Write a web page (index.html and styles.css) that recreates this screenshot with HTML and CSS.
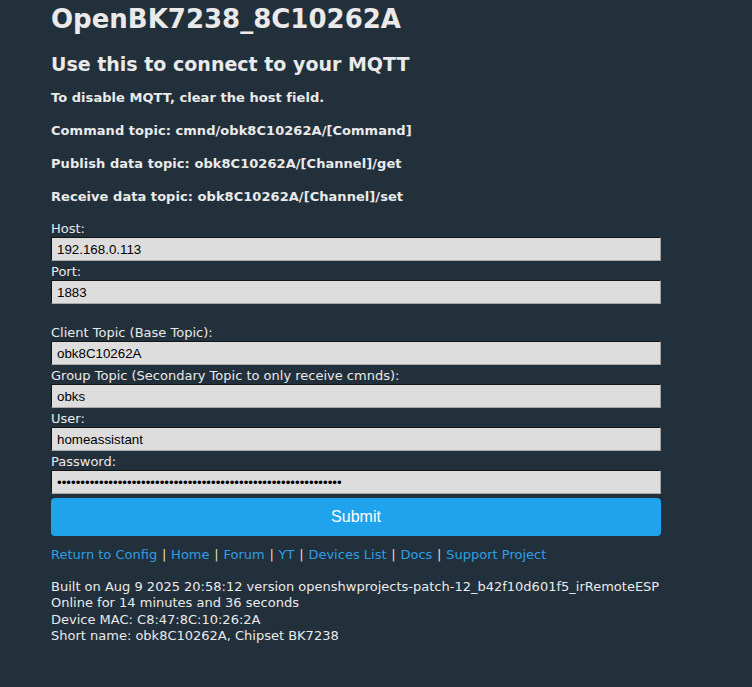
FILE: index.html
```html
<!DOCTYPE html>
<html>
<head>
<meta charset="utf-8">
<link rel="stylesheet" href="styles.css">
</head>
<body>
<div class="wrap">
  <h1 class="title">OpenBK7238_8C10262A</h1>
  <h2 class="subtitle">Use this to connect to your MQTT</h2>
  <p class="info">To disable MQTT, clear the host field.</p>
  <p class="info">Command topic: cmnd/obk8C10262A/[Command]</p>
  <p class="info">Publish data topic: obk8C10262A/[Channel]/get</p>
  <p class="info">Receive data topic: obk8C10262A/[Channel]/set</p>
  <form class="form">
    <label class="lbl">Host:</label>
    <input class="field" type="text" value="192.168.0.113">
    <label class="lbl">Port:</label>
    <input class="field" type="text" value="1883">
    <div class="spacer"></div>
    <label class="lbl">Client Topic (Base Topic):</label>
    <input class="field" type="text" value="obk8C10262A">
    <label class="lbl">Group Topic (Secondary Topic to only receive cmnds):</label>
    <input class="field" type="text" value="obks">
    <label class="lbl">User:</label>
    <input class="field" type="text" value="homeassistant">
    <label class="lbl">Password:</label>
    <input class="field" type="password" value="0123456789012345678901234567890123456789012345678901234567890">
    <button class="submit" type="button">Submit</button>
  </form>
  <div class="links">
    <a href="#">Return to Config</a><span class="sep"> | </span><a href="#">Home</a><span class="sep"> | </span><a href="#">Forum</a><span class="sep"> | </span><a href="#">YT</a><span class="sep"> | </span><a href="#">Devices List</a><span class="sep"> | </span><a href="#">Docs</a><span class="sep"> | </span><a href="#">Support Project</a>
  </div>
  <div class="footer">
    <div>Built on Aug 9 2025 20:58:12 version openshwprojects-patch-12_b42f10d601f5_irRemoteESP</div>
    <div>Online for 14 minutes and 36 seconds</div>
    <div>Device MAC: C8:47:8C:10:26:2A</div>
    <div>Short name: obk8C10262A, Chipset BK7238</div>
  </div>
</div>
</body>
</html>
```
FILE: styles.css
```css
html, body {
  margin: 0;
  padding: 0;
  background: #22303c;
  color: #eaeaea;
  font-family: "DejaVu Sans", Verdana, sans-serif;
}
.wrap {
  width: 610px;
  margin-left: 51px;
}
.title {
  font-size: 26px;
  line-height: 30px;
  margin: 4px 0 0 0;
  font-weight: bold;
}
.subtitle {
  font-size: 19px;
  line-height: 24px;
  margin: 18px 0 0 0;
  font-weight: bold;
}
.info {
  font-size: 13px;
  line-height: 16px;
  font-weight: bold;
  margin: 0;
  margin-top: 17px;
  letter-spacing: 0.05px;
}
.info:first-of-type {
  margin-top: 14px;
}
.form {
  display: flex;
  flex-direction: column;
  margin-top: 15px;
}
.lbl {
  font-size: 13px;
  line-height: 17px;
  display: block;
}
.field {
  box-sizing: border-box;
  width: 100%;
  height: 24px;
  margin: 0 0 2px 0;
  padding: 0 5px;
  background: #dddddd;
  color: #000;
  font-family: "Liberation Sans", Arial, sans-serif;
  font-size: 13.333px;
  border-style: solid;
  border-width: 1px;
  border-color: #151515 #a0a0a0 #a8a8a8 #151515;
  outline: none;
}
.spacer {
  height: 18px;
}
.submit {
  margin-top: 2px;
  height: 38px;
  width: 100%;
  border: 0;
  border-radius: 4px;
  background: #1fa3ec;
  color: #fff;
  font-family: "Liberation Sans", Arial, sans-serif;
  font-size: 16px;
}
.links {
  font-size: 13px;
  line-height: 17px;
  margin-top: 10px;
}
.links a {
  color: #2f9fe4;
  text-decoration: none;
}
.sep {
  color: #e6dcc0;
  margin: 0 0.65px;
}
.footer {
  font-size: 13px;
  line-height: 16.3px;
  margin-top: 16px;
  white-space: nowrap;
}
```
